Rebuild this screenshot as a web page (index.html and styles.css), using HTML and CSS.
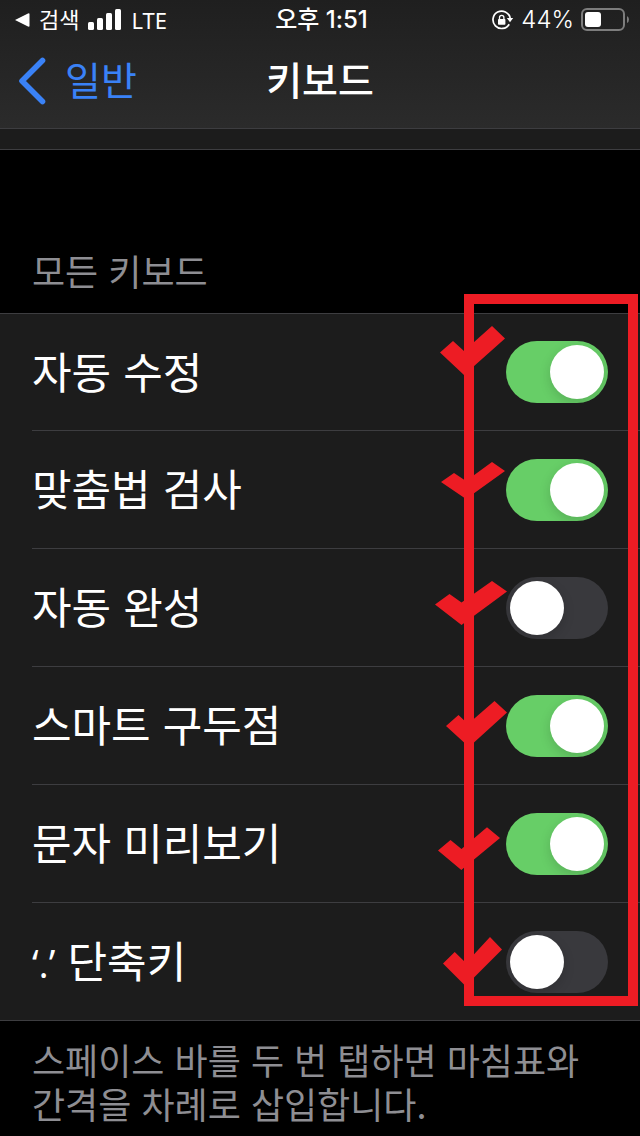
FILE: index.html
```
<!DOCTYPE html>
<html lang="ko">
<head>
<meta charset="utf-8">
<meta name="viewport" content="width=device-width, initial-scale=1.0">
<title>키보드</title>
<link rel="stylesheet" href="styles.css">
</head>
<body>
<header class="top">
  <div class="status">
    <div class="status-left">
      <svg width="16" height="16" viewBox="0 0 16 16"><path d="M1 8 L14 1.5 Q15.500 1 15.500 2 V14 Q15.500 15 14 14.5 Z" fill="#fff"/></svg>
      <span>검색</span>
      <svg width="34" height="22" viewBox="0 0 34 22" fill="#fff">
        <rect x="0" y="13" width="6" height="8" rx="1.5"/>
        <rect x="9" y="9" width="6" height="12" rx="1.5"/>
        <rect x="18" y="4" width="6" height="17" rx="1.5"/>
        <rect x="27" y="0" width="6" height="21" rx="1.5"/>
      </svg>
      <span class="carrier">LTE</span>
    </div>
    <div class="time">오후 1:51</div>
    <div class="status-right">
      <svg width="22" height="20" viewBox="0 0 22 20">
        <path d="M17.2 14.2 A8.7 8.7 0 1 1 18.2 8" fill="none" stroke="#fff" stroke-width="1.7"/>
        <path d="M14.8 8 H21.2 L18 12.2 Z" fill="#fff"/>
        <rect x="6" y="9" width="7.4" height="5.8" rx="0.8" fill="#fff"/>
        <path d="M7.5 9.5 V7.5 a2.2 2.2 0 0 1 4.4 0 V9.5" fill="none" stroke="#fff" stroke-width="1.3"/>
      </svg>
      <span class="percent">44%</span>
      <svg width="48" height="24" viewBox="0 0 48 24">
        <rect x="1" y="1" width="42" height="21" rx="5" fill="none" stroke="#7d7d7d" stroke-width="2"/>
        <rect x="4" y="4" width="16" height="15" rx="3" fill="#fff"/>
        <path d="M46 8 Q48 9 48 11.5 Q48 14 46 15 Z" fill="#7d7d7d"/>
      </svg>
    </div>
  </div>
  <nav class="nav">
    <a class="back" href="#">
      <svg width="28" height="48" viewBox="0 0 28 48"><path d="M24.5 3.5 L4 24 L24.5 44.5" fill="none" stroke="#3a82f7" stroke-width="5.6" stroke-linecap="round" stroke-linejoin="round"/></svg>
      <span>일반</span>
    </a>
    <h1>키보드</h1>
  </nav>
</header>

<main>
  <div class="prev-group"></div>
  <h2>모든 키보드</h2>
  <div class="group">
    <div class="row">
      <label for="autocorrect">자동 수정</label>
      <input class="switch" type="checkbox" id="autocorrect" checked>
      <svg class="mark" viewBox="0 0 80 118"><polygon points="10,40.5 23,29 34,39 62,14 75,26.5 34,63"/></svg>
    </div>
    <div class="row">
      <label for="spelling">맞춤법 검사</label>
      <input class="switch" type="checkbox" id="spelling" checked>
      <svg class="mark" viewBox="0 0 80 118"><polygon points="11,52 24,43 36,51 62,32 75,41 36,69"/></svg>
    </div>
    <div class="row">
      <label for="predictive">자동 완성</label>
      <input class="switch" type="checkbox" id="predictive">
      <svg class="mark" viewBox="0 0 80 118"><polygon points="5,56.5 19.5,46 31.5,54.5 62,33 77,43.5 31.5,77"/></svg>
    </div>
    <div class="row">
      <label for="punctuation">스마트 구두점</label>
      <input class="switch" type="checkbox" id="punctuation" checked>
      <svg class="mark" viewBox="0 0 80 118"><polygon points="16,60 28.5,49 38,58 64.5,35 77,46.5 39,81"/></svg>
    </div>
    <div class="row">
      <label for="preview">문자 미리보기</label>
      <input class="switch" type="checkbox" id="preview" checked>
      <svg class="mark" viewBox="0 0 80 118"><polygon points="8,66.5 20.5,56 31.5,65 57,43.3 70,54 31.3,86"/></svg>
    </div>
    <div class="row">
      <label for="shortcut"><span class="quotes">‘.’</span> 단축키</label>
      <input class="switch" type="checkbox" id="shortcut">
      <svg class="mark" viewBox="0 0 80 118"><polygon points="13,61.5 24.7,50 36,61 60,35 72,47.5 35.5,84"/></svg>
    </div>
    <div class="frame"></div>
  </div>
  <p class="note">스페이스 바를 두 번 탭하면 마침표와 간격을 차례로 삽입합니다.</p>
</main>
</body>
</html>
```
FILE: styles.css
```
* { box-sizing: border-box; }
body {
  margin: 0;
  background: #000;
  color: #fff;
  font-family: "Noto Sans CJK KR", sans-serif;
  word-break: keep-all;
}
h1, h2, p { margin: 0; font-weight: 400; }

/* status bar + navigation */
.top {
  background: linear-gradient(#1f1f1f, #2b2b2b);
  border-bottom: 1px solid #3d3d40;
}
.status {
  display: grid;
  grid-template-columns: 1fr auto 1fr;
  align-items: center;
  height: 40px;
  padding: 0 11px 0 14px;
  font-family: Inter, "Noto Sans CJK KR", sans-serif;
  font-size: 22px;
  line-height: 40px;
}
.status-left, .status-right {
  display: flex;
  align-items: center;
  gap: 9px;
}
.status-right {
  justify-content: flex-end;
  gap: 7px;
}
.carrier { font-family: "Noto Sans", sans-serif; }
.time, .percent { font-size: 24px; }
.time { font-weight: 500; }
.percent { font-weight: 300; }
.nav {
  display: grid;
  grid-template-columns: 1fr auto 1fr;
  align-items: center;
  height: 88px;
  padding: 0 18px 6px;
  font-size: 39px;
  line-height: 56px;
}
.nav h1 { font-size: 39px; font-weight: 500; }
.nav h1, .back span { padding-bottom: 6px; }
.back {
  display: flex;
  align-items: center;
  gap: 19px;
  color: #3a82f7;
  text-decoration: none;
}

/* list */
.prev-group {
  height: 21px;
  background: #1c1c1c;
  border-bottom: 1px solid #3d3d40;
}
h2 {
  padding: 94px 32px 17px;
  color: #8e8e93;
  font-size: 36px;
  line-height: 52px;
}
.group {
  position: relative;
  padding-left: 32px;
  background: #1c1c1c;
  border-top: 1px solid #3d3d40;
  border-bottom: 1px solid #3d3d40;
}
.row {
  position: relative;
  display: flex;
  align-items: center;
  justify-content: space-between;
  min-height: 118px;
  padding-right: 32px;
  border-bottom: 1px solid #3d3d40;
  font-size: 43px;
  line-height: 64px;
}
.row:first-child { min-height: 117px; }
.row:nth-child(6) {
  min-height: 117px;
  border-bottom: none;
}
.row label { padding-bottom: 5px; }
.quotes {
  font-family: "Open Sans", sans-serif;
  font-size: 39px;
  line-height: 1;
}
.switch {
  appearance: none;
  overflow: hidden;
  width: 102px;
  height: 62px;
  margin: 0;
  padding: 4px;
  border-radius: 31px;
  background: #39393d;
}
.switch::before {
  content: "";
  display: block;
  width: 54px;
  height: 54px;
  border-radius: 50%;
  background: #fff;
  box-shadow: 0 4px 12px rgba(0, 0, 0, 0.15);
}
.switch:checked { background: #67ce67; }
.switch:checked::before { margin-left: auto; }
.note {
  padding: 16px 32px 8px;
  color: #8e8e93;
  font-size: 36px;
  line-height: 44px;
}

/* red markup over the switches */
.mark {
  position: absolute;
  right: 130px;
  bottom: 0;
  width: 80px;
  height: 118px;
  fill: #ed1c24;
  pointer-events: none;
}
.frame {
  position: absolute;
  top: -20px;
  right: 2px;
  bottom: 14px;
  width: 174px;
  border: 10px solid #ed1c24;
  pointer-events: none;
}
```
